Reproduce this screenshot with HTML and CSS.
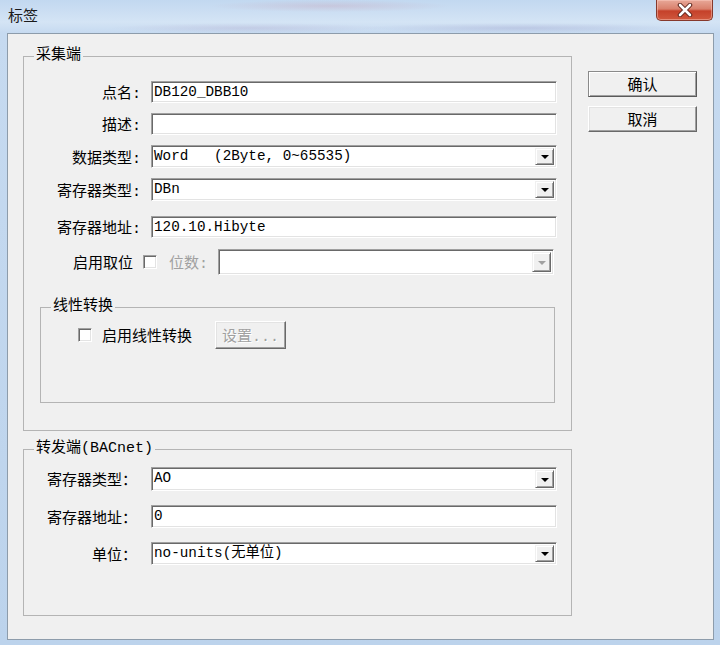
FILE: index.html
```html
<!DOCTYPE html>
<html lang="zh-CN">
<head>
    <meta charset="UTF-8">
    <title>标签</title>
    <link rel="stylesheet" href="styles.css">
</head>
<body>
    <div class="window">
        <div class="titlebar">
            <span class="title">标签</span>
            <button class="close" title="关闭">
                <svg width="16" height="14" viewBox="0 0 16 14">
                    <path d="M3 2 L13 12 M13 2 L3 12" stroke="#5a2219" stroke-width="4.5" stroke-linecap="round"/>
                    <path d="M3 2 L13 12 M13 2 L3 12" stroke="#fff" stroke-width="2.6" stroke-linecap="round"/>
                </svg>
            </button>
        </div>

        <div class="client">
            <div class="groups">
                <!-- 采集端 -->
                <fieldset class="group group-collect">
                    <legend>采集端</legend>
                    <div class="rows">
                        <div class="row">
                            <label class="lbl">点名:</label>
                            <div class="edit">DB120_DBB10</div>
                        </div>
                        <div class="row">
                            <label class="lbl">描述:</label>
                            <div class="edit"></div>
                        </div>
                        <div class="row">
                            <label class="lbl">数据类型:</label>
                            <div class="combo"><span class="value">Word   (2Byte, 0~65535)</span><span class="arrow"></span></div>
                        </div>
                        <div class="row">
                            <label class="lbl">寄存器类型:</label>
                            <div class="combo"><span class="value">DBn</span><span class="arrow"></span></div>
                        </div>
                        <div class="row spaced">
                            <label class="lbl">寄存器地址:</label>
                            <div class="edit">120.10.Hibyte</div>
                        </div>
                        <div class="row bitrow">
                            <span>启用取位</span>
                            <span class="check"></span>
                            <span class="muted">位数:</span>
                            <div class="combo combo-bits disabled"><span class="value"></span><span class="arrow"></span></div>
                        </div>
                    </div>

                    <!-- 线性转换 -->
                    <fieldset class="group group-linear">
                        <legend>线性转换</legend>
                        <div class="checkrow">
                            <span class="check"></span>
                            <span class="check-text">启用线性转换</span>
                            <button class="btn btn-setup" disabled>设置...</button>
                        </div>
                    </fieldset>
                </fieldset>

                <!-- 转发端 -->
                <fieldset class="group group-forward">
                    <legend>转发端(BACnet)</legend>
                    <div class="rows rows-forward">
                        <div class="row">
                            <label class="lbl lbl-wide">寄存器类型：</label>
                            <div class="combo tall"><span class="value">AO</span><span class="arrow"></span></div>
                        </div>
                        <div class="row">
                            <label class="lbl lbl-wide">寄存器地址：</label>
                            <div class="edit tall-edit">0</div>
                        </div>
                        <div class="row">
                            <label class="lbl lbl-wide">单位：</label>
                            <div class="combo"><span class="value">no-units(无单位)</span><span class="arrow"></span></div>
                        </div>
                    </div>
                </fieldset>
            </div>

            <div class="actions">
                <button class="btn btn-default">确认</button>
                <button class="btn">取消</button>
            </div>
        </div>
    </div>
</body>
</html>
```

FILE: styles.css
```css
* {
    box-sizing: border-box;
}

body {
    margin: 0;
    width: 720px;
    height: 645px;
    overflow: hidden;
    font-family: "Liberation Mono", "Noto Sans CJK SC", monospace;
    font-size: 15px;
    color: #000;
}

/* Window frame */
.window {
    height: 645px;
    display: flex;
    flex-direction: column;
    background:
        radial-gradient(ellipse 120px 6px at 330px 6px, rgba(200, 140, 160, 0.25), transparent),
        radial-gradient(ellipse 160px 5px at 520px 28px, rgba(120, 110, 170, 0.2), transparent),
        radial-gradient(ellipse 140px 5px at 250px 28px, rgba(150, 120, 170, 0.18), transparent),
        linear-gradient(to bottom, #c2d8f0 0, #d4e4f5 22px, #c6daf0 33px, #bcd3ec 100%);
}

.titlebar {
    height: 33px;
    flex: none;
    display: flex;
    justify-content: space-between;
    align-items: flex-start;
    padding: 0 7px 0 8px;
}

.title {
    font-family: "Noto Sans CJK SC", sans-serif;
    font-size: 15px;
    line-height: 20px;
    margin-top: 5px;
    color: #1b1b1b;
}

.close {
    width: 57px;
    height: 21px;
    padding: 0;
    border: 1px solid #86392c;
    border-top: none;
    border-radius: 0 0 5px 5px;
    background: linear-gradient(to bottom, #e8a898 0, #d9806c 45%, #c5412a 55%, #d0583e 100%);
    box-shadow: inset 0 0 0 1px rgba(255, 210, 200, 0.45);
    display: flex;
    align-items: center;
    justify-content: center;
}

/* Client area */
.client {
    flex: 1;
    margin: 0 6px 5px 7px;
    border: 1px solid #8d9cab;
    background: #f0f0f0;
    display: flex;
    align-items: flex-start;
    padding: 13px 0 0 15px;
}

.groups {
    width: 549px;
}

.actions {
    margin-left: 16px;
    padding-top: 24px;
    display: flex;
    flex-direction: column;
    gap: 9px;
}

/* Group boxes */
.group {
    margin: 0;
    min-width: 0;
    border: 1px solid #b4b4b4;
}

.group legend {
    margin-left: 10px;
    padding: 0 2px;
    line-height: 18px;
}

.group-collect {
    padding: 16px 14px 27px 0;
}

.group-linear {
    margin: 23px 2px 0 16px;
    padding: 5px 0 53px 0;
}

.group-forward {
    margin-top: 9px;
    padding: 9px 14px 50px 0;
}

.rows {
    display: flex;
    flex-direction: column;
    gap: 10px;
}

.rows-forward {
    gap: 14px;
}

.row {
    display: flex;
    align-items: center;
}

.row.spaced {
    margin-top: 5px;
}

.row.bitrow {
    margin-top: 1px;
}

.lbl {
    width: 123px;
    margin-right: 4px;
    padding-right: 6px;
    text-align: right;
    flex: none;
}

.lbl-wide {
    padding-right: 10px;
}

/* Sunken edit / combo */
.edit,
.combo {
    flex: 1;
    height: 22px;
    background: #fff;
    border: 1px solid;
    border-color: #a0a0a0 #fff #fff #a0a0a0;
    box-shadow: inset 1px 1px 0 #696969, inset -1px -1px 0 #e3e3e3;
    font-size: 14.3px;
    line-height: 20px;
    padding-left: 2px;
    white-space: pre;
    overflow: hidden;
}

.combo {
    height: 23px;
    display: flex;
    align-items: stretch;
    padding: 2px;
}

.combo.tall {
    height: 24px;
}

.tall-edit {
    height: 23px;
}

.combo .value {
    flex: 1;
    line-height: 19px;
    margin-top: -1px;
}

.arrow {
    width: 19px;
    flex: none;
    background: #f0f0f0;
    border: 1px solid;
    border-color: #f0f0f0 #696969 #696969 #f0f0f0;
    box-shadow: inset 1px 1px 0 #fff, inset -1px -1px 0 #a0a0a0;
    display: flex;
    align-items: center;
    justify-content: center;
}

.arrow::before {
    content: "";
    width: 0;
    height: 0;
    border-left: 4px solid transparent;
    border-right: 4px solid transparent;
    border-top: 4px solid #000;
    margin-top: 1px;
}

.disabled .arrow::before {
    border-top-color: #a0a0a0;
}

/* 启用取位 row */
.bitrow {
    padding-left: 49px;
}

.combo-bits {
    flex: none;
    width: 336px;
    height: 26px;
    margin-left: 10px;
}

.muted {
    color: #a0a0a0;
    margin-left: 12px;
}

.check {
    width: 14px;
    height: 14px;
    flex: none;
    background: #fff;
    border: 1px solid;
    border-color: #a0a0a0 #fff #fff #a0a0a0;
    box-shadow: inset 1px 1px 0 #696969, inset -1px -1px 0 #e3e3e3;
}

.bitrow .check {
    margin-left: 10px;
}

.checkrow {
    display: flex;
    align-items: center;
    height: 28px;
    padding-left: 37px;
}

.check-text {
    margin-left: 10px;
}

/* Raised buttons */
.btn {
    width: 109px;
    height: 26px;
    padding: 0;
    font-family: "Liberation Mono", "Noto Sans CJK SC", monospace;
    font-size: 15px;
    color: #000;
    background: #f0f0f0;
    border: 1px solid;
    border-color: #fff #696969 #696969 #fff;
    box-shadow: inset -1px -1px 0 #a0a0a0, inset 1px 1px 0 #e3e3e3;
}

.btn-default {
    border-color: #8a8a8a #5a5a5a #5a5a5a #8a8a8a;
    box-shadow: inset 1px 1px 0 #fff, inset -1px -1px 0 #a0a0a0;
}

.btn-setup {
    width: 71px;
    height: 28px;
    margin-left: 23px;
    color: #a0a0a0;
    text-shadow: 1px 1px 0 #fff;
}
```
